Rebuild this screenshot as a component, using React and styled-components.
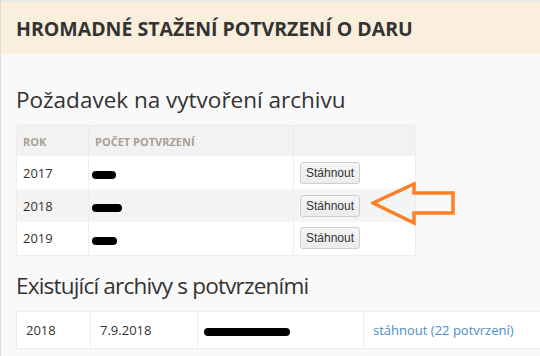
import React from 'react'
import styled, { createGlobalStyle } from 'styled-components'

const GlobalStyle = createGlobalStyle`
  html, body {
    margin: 0;
    padding: 0;
    background: #f9f9f9;
    overflow: hidden;
  }
  body {
    font-family: "Open Sans", "Liberation Sans", sans-serif;
    color: #333;
  }
`

const requests = [
  { year: 2017, blot: 24 },
  { year: 2018, blot: 30 },
  { year: 2019, blot: 25 },
]

function App() {
  return (
    <Page>
      <GlobalStyle />
      <Header>
        <Title>Hromadné stažení potvrzení o daru</Title>
      </Header>
      <Content>
        <Heading>Požadavek na vytvoření archivu</Heading>
        <RequestTable>
          <colgroup>
            <col style={{ width: 72 }} />
            <col style={{ width: 205 }} />
            <col />
          </colgroup>
          <thead>
            <tr>
              <Th>Rok</Th>
              <Th>Počet potvrzení</Th>
              <Th />
            </tr>
          </thead>
          <tbody>
            {requests.map((r, i) => (
              <Row key={r.year} $striped={i === 1}>
                <Td>{r.year}</Td>
                <Td><Blot $w={r.blot} /></Td>
                <Td><Button>Stáhnout</Button></Td>
              </Row>
            ))}
          </tbody>
        </RequestTable>
        <Arrow width="86" height="46" viewBox="0 0 86 46">
          <path
            d="M2 21 L43 2 L43 11 L82 11 L82 31 L43 31 L43 41 Z"
            fill="none"
            stroke="#ff7f27"
            strokeWidth="3.5"
            strokeLinejoin="miter"
          />
        </Arrow>
        <Heading $second>Existující archivy s potvrzeními</Heading>
        <ArchiveTable>
          <colgroup>
            <col style={{ width: 74 }} />
            <col style={{ width: 107 }} />
            <col style={{ width: 166 }} />
            <col />
          </colgroup>
          <tbody>
            <tr>
              <ArchTd>2018</ArchTd>
              <ArchTd>7.9.2018</ArchTd>
              <ArchTd><Blot $w={86} /></ArchTd>
              <ArchTd><Link href="#">stáhnout (22 potvrzení)</Link></ArchTd>
            </tr>
          </tbody>
        </ArchiveTable>
      </Content>
    </Page>
  )
}

const Page = styled.div`
  min-height: 356px;
  border-top: 2px solid #e8e8e8;
  border-left: 1px solid #d6dce6;
  box-sizing: border-box;
`

const Header = styled.div`
  height: 52px;
  background: #faeedc;
  display: flex;
  align-items: center;
  padding: 0 15px;
`

const Title = styled.h1`
  margin: 0;
  font-family: "Open Sans", sans-serif;
  font-size: 19.5px;
  font-weight: 700;
  text-transform: uppercase;
  color: #333;
  white-space: nowrap;
`

const Content = styled.div`
  position: relative;
  padding: 31px 0 0 15px;
`

const Heading = styled.h2`
  margin: ${p => (p.$second ? '15px' : '0')} 0 10px;
  font-family: "Open Sans", sans-serif;
  font-size: 22.5px;
  font-weight: 400;
  line-height: 30px;
  letter-spacing: ${p => (p.$second ? '-0.8px' : '0')};
  color: #333;
  white-space: nowrap;
`

const RequestTable = styled.table`
  width: 400px;
  table-layout: fixed;
  border-collapse: collapse;
  background: #fff;
  border: 1px solid #eee;
  font-size: 13px;
`

const Th = styled.th`
  height: 30px;
  padding: 0 6px;
  background: #f2f2f2;
  text-align: left;
  font-size: 11px;
  font-weight: 700;
  text-transform: uppercase;
  color: #a89f93;
  border-left: 1px solid #eaeaea;
  &:first-child { border-left: none; }
`

const Row = styled.tr`
  height: 33px;
  background: ${p => (p.$striped ? '#f4f4f4' : '#fff')};
`

const Td = styled.td`
  padding: 0 6px;
  border-left: 1px solid #eee;
  vertical-align: middle;
  &:first-child { border-left: none; }
`

const Blot = styled.span`
  display: inline-block;
  width: ${p => p.$w}px;
  height: 8px;
  margin: 2px 0 0 -3px;
  border-radius: 4px;
  background: #000;
  vertical-align: middle;
`

const Button = styled.button`
  height: 22px;
  padding: 0 5px;
  font-family: "Liberation Sans", Arial, sans-serif;
  font-size: 12px;
  color: #333;
  background: linear-gradient(#f6f6f6, #ececec);
  border: 1px solid #cfcfcf;
  border-radius: 3px;
`

const Arrow = styled.svg`
  position: absolute;
  left: 370px;
  top: 128px;
`

const ArchiveTable = styled.table`
  width: 560px;
  table-layout: fixed;
  border-collapse: collapse;
  background: #fff;
  border: 1px solid #eee;
  font-size: 13px;
`

const ArchTd = styled.td`
  height: 36px;
  padding: 0 9px;
  border-left: 1px solid #eee;
  white-space: nowrap;
  &:first-child { border-left: none; }
`

const Link = styled.a`
  color: #4a8fc7;
  text-decoration: none;
`

export default App
